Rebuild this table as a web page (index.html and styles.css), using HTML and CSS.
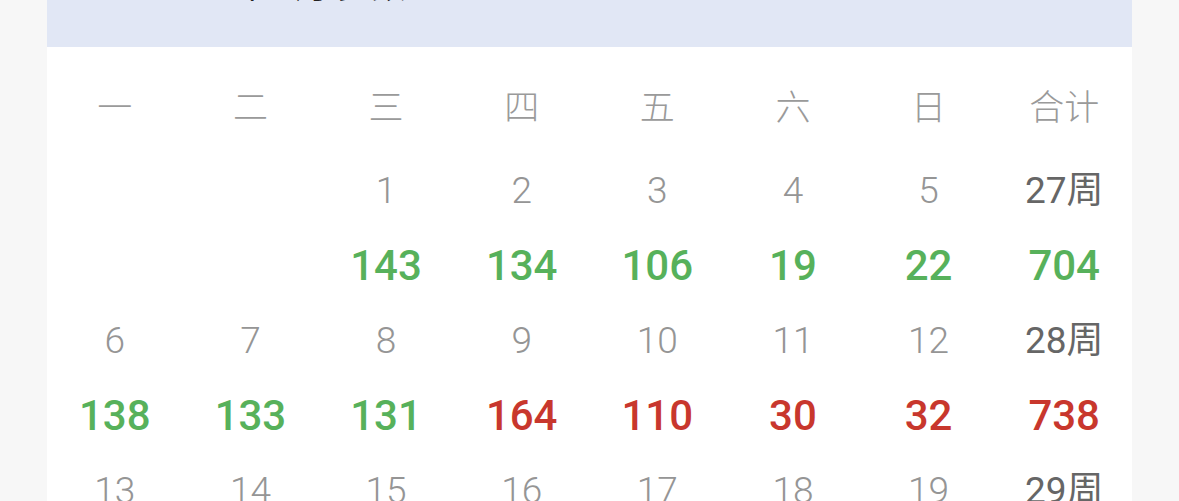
FILE: index.html
```html
<!DOCTYPE html>
<html>

<head>
    <title>月度统计</title>
    <link rel="stylesheet" href="styles.css">
</head>

<body>
    <div class="card">
        <div class="card-head">
            <div class="title">2023年 7月 步数</div>
        </div>

        <div class="grid weekdays">
            <div>一</div>
            <div>二</div>
            <div>三</div>
            <div>四</div>
            <div>五</div>
            <div>六</div>
            <div>日</div>
            <div>合计</div>
        </div>

        <!-- 第27周 -->
        <div class="grid dates">
            <div></div>
            <div></div>
            <div>1</div>
            <div>2</div>
            <div>3</div>
            <div>4</div>
            <div>5</div>
            <div class="week">27周</div>
        </div>
        <div class="grid values">
            <div></div>
            <div></div>
            <div class="good">143</div>
            <div class="good">134</div>
            <div class="good">106</div>
            <div class="good">19</div>
            <div class="good">22</div>
            <div class="good">704</div>
        </div>

        <!-- 第28周 -->
        <div class="grid dates">
            <div>6</div>
            <div>7</div>
            <div>8</div>
            <div>9</div>
            <div>10</div>
            <div>11</div>
            <div>12</div>
            <div class="week">28周</div>
        </div>
        <div class="grid values">
            <div class="good">138</div>
            <div class="good">133</div>
            <div class="good">131</div>
            <div class="bad">164</div>
            <div class="bad">110</div>
            <div class="bad">30</div>
            <div class="bad">32</div>
            <div class="bad">738</div>
        </div>

        <!-- 第29周 -->
        <div class="grid dates">
            <div>13</div>
            <div>14</div>
            <div>15</div>
            <div>16</div>
            <div>17</div>
            <div>18</div>
            <div>19</div>
            <div class="week">29周</div>
        </div>
    </div>
</body>

</html>
```

FILE: styles.css
```css
body {
    font-family: Roboto, "Noto Sans CJK SC", sans-serif;
    margin: 0;
    padding: 0;
    background: #f7f7f7;
    overflow: hidden;
}

.card {
    margin: 0 47px;
    background: #fff;
}

.card-head {
    height: 47px;
    background: #e1e7f5;
    overflow: hidden;
}

.title {
    margin-top: -31px;
    padding-left: 110px;
    font-size: 34px;
    line-height: 34px;
    color: #222;
}

.grid {
    display: grid;
    grid-template-columns: repeat(8, 1fr);
    text-align: center;
}

/* 星期标题 */
.weekdays {
    height: 106px;
    padding-top: 8px;
    box-sizing: border-box;
    align-items: center;
    font-family: "Noto Sans CJK SC", sans-serif;
    font-weight: 300;
    font-size: 35px;
    color: #9a9a9a;
}

.dates {
    height: 75px;
    line-height: 75px;
    font-size: 37px;
    font-weight: 300;
    color: #959595;
}

.dates .week {
    color: #666;
    font-weight: 400;
}

.values {
    height: 75px;
    line-height: 75px;
    font-size: 42px;
    font-weight: 500;
}

.good {
    color: #57b15b;
}

.bad {
    color: #c8372d;
}
```
